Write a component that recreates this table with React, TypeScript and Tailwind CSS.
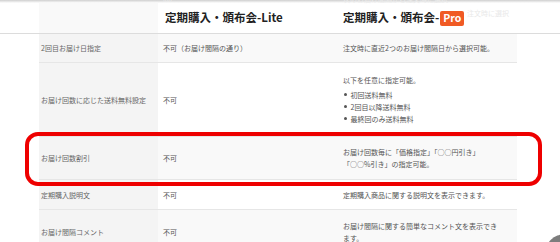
import React from "react";

const font = { fontFamily: '"Noto Sans CJK JP", "Noto Sans", sans-serif' };

function Row({
  label,
  c2,
  c3,
  gray,
  h,
}: {
  label: string;
  c2: React.ReactNode;
  c3: React.ReactNode;
  gray?: boolean;
  h: string;
}) {
  return (
    <div className={`flex ${h} border-b border-[#e6e6e6]`}>
      <div className="w-[119px] shrink-0 bg-[#f4f4f4] pl-[2px] flex items-center text-[7px] leading-[12px] text-[#666]">
        {label}
      </div>
      <div
        className={`w-[180px] shrink-0 pl-[5px] flex items-center text-[7px] leading-[12px] text-[#555] ${gray ? "bg-[#f9f9f9]" : "bg-white"}`}
      >
        {c2}
      </div>
      <div
        className={`w-[179px] shrink-0 pl-[5px] pr-[20px] flex items-center text-[7px] leading-[12px] text-[#555] ${gray ? "bg-[#f9f9f9]" : "bg-white"}`}
      >
        <div>{c3}</div>
      </div>
    </div>
  );
}

export default function App() {
  return (
    <div className="relative w-[560px] h-[242px] overflow-hidden bg-white" style={font}>
      {/* header */}
      <div className="relative h-[34px] bg-white border-b border-[#dcdcdc]">
        <div className="absolute left-0 top-0 w-full h-[3px] bg-gradient-to-b from-[#cfcfcf] to-white" />
        <div className="absolute left-[163px] top-[-7px] text-[7px] text-[#ececec]">間)</div>
        <div className="absolute left-[343px] top-[-6px] text-[7px] text-[#ececec]">次のお届け間隔から注文時に選択</div>
        <div className="absolute left-[467px] top-[8px] text-[7px] text-[#e9e9e9]">注文時に選択</div>
        <div className="flex h-full pl-[39px] pt-[3px]">
          <div className="w-[119px] bg-[#f9f9f9]" />
          <div className="w-[180px] pl-[7px] flex items-center">
            <span className="text-[11.5px] font-bold text-[#222]">定期購入・頒布会-Lite</span>
          </div>
          <div className="w-[179px] pl-[5px] flex items-center">
            <span className="text-[11.5px] font-bold text-[#222]">定期購入・頒布会-</span>
            <span className="ml-[1px] px-[3px] h-[15px] flex items-center rounded-[2px] bg-[#f05a24] text-white text-[10.5px] font-bold leading-none">
              Pro
            </span>
          </div>
        </div>
      </div>

      {/* table */}
      <div className="ml-[39px] w-[478px]">
        <Row h="h-[29px]" gray label="2回目お届け日指定" c2="不可（お届け間隔の通り）" c3="注文時に直近2つのお届け間隔日から選択可能。" />
        <Row
          h="h-[74px]"
          label="お届け回数に応じた送料無料設定"
          c2="不可"
          c3={
            <div className="pb-[1px]">
              <p className="mb-[3px]">以下を任意に指定可能。</p>
              <ul>
                <li className="flex items-center"><span className="w-[2.5px] h-[2.5px] rounded-full bg-[#555] mr-[4px] ml-[1px]" />初回送料無料</li>
                <li className="flex items-center"><span className="w-[2.5px] h-[2.5px] rounded-full bg-[#555] mr-[4px] ml-[1px]" />2回目以降送料無料</li>
                <li className="flex items-center"><span className="w-[2.5px] h-[2.5px] rounded-full bg-[#555] mr-[4px] ml-[1px]" />最終回のみ送料無料</li>
              </ul>
            </div>
          }
        />
        <Row
          h="h-[43px]"
          gray
          label="お届け回数割引"
          c2="不可"
          c3={
            <span className="whitespace-nowrap">
              お届け回数毎に「価格指定」「○○円引き」
              <br />
              「○○%引き」の指定可能。
            </span>
          }
        />
        <Row h="h-[30px]" label="定期購入説明文" c2="不可" c3="定期購入商品に関する説明文を表示できます。" />
        <Row
          h="h-[45px]"
          gray
          label="お届け間隔コメント"
          c2="不可"
          c3={
            <span className="whitespace-nowrap">
              お届け間隔に関する簡単なコメント文を表示でき
              <br />
              ます。
            </span>
          }
        />
      </div>

      {/* red highlight */}
      <div className="absolute left-[25px] top-[132px] w-[517px] h-[54px] rounded-[13px] border-[4px] border-[#ee0000]" />

      {/* scroll-top button */}
      <div className="absolute left-[545px] top-[234px] w-[40px] h-[40px] rounded-full bg-[#7d7d7d]" />
    </div>
  );
}
